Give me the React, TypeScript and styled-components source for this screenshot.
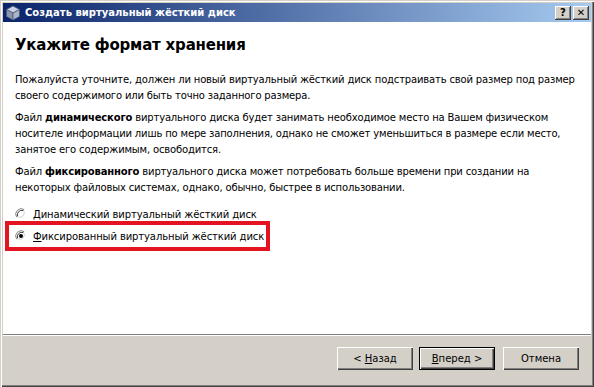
import { createGlobalStyle, styled } from 'styled-components';

const GlobalStyle = createGlobalStyle`
  html, body {
    margin: 0;
    padding: 0;
    background: #d4d0c8;
  }
  body {
    font-family: 'DejaVu Sans', 'Liberation Sans', sans-serif;
    color: #000;
  }
`;

const Window = styled.div`
  width: 594px;
  height: 387px;
  box-sizing: border-box;
  display: flex;
  flex-direction: column;
  padding: 3px 3px 2px 3px;
  background: #d4d0c8;
  box-shadow:
    inset 1px 1px #d4d0c8,
    inset 2px 2px #ffffff,
    inset -1px -1px #404040,
    inset -2px -2px #808080;
`;

const TitleBar = styled.div`
  height: 19px;
  display: flex;
  align-items: center;
  padding: 0 2px 0 2px;
  background: linear-gradient(to right, #0a246a, #a6caf0);
`;

const TitleText = styled.span`
  flex: 1;
  margin-left: 4px;
  color: #fff;
  font-weight: bold;
  font-size: 10px;
  white-space: nowrap;
`;

const CaptionButton = styled.button`
  width: 16px;
  height: 14px;
  margin-left: 2px;
  padding: 0;
  display: flex;
  align-items: center;
  justify-content: center;
  border: none;
  background: #d4d0c8;
  font-family: 'DejaVu Sans', sans-serif;
  font-weight: bold;
  font-size: 10px;
  line-height: 1;
  color: #000;
  box-shadow:
    inset -1px -1px #404040,
    inset 1px 1px #ffffff,
    inset -2px -2px #808080;
`;

const Content = styled.div`
  flex: 1;
  background: #fff;
  padding: 14px 12px 0 12px;
  border-bottom: 1px solid #808080;
  box-shadow: 0 1px 0 #ffffff;
  margin-bottom: 1px;
`;

const Heading = styled.h1`
  margin: 0 0 17px 0;
  font-size: 15px;
  line-height: 19px;
  font-weight: bold;
  letter-spacing: -0.2px;
`;

const Paragraph = styled.p`
  margin: 0 0 6px 0;
  font-size: 10px;
  line-height: 16px;
  letter-spacing: -0.16px;
  white-space: nowrap;
`;

const Options = styled.div`
  display: flex;
  flex-direction: column;
  gap: 0;
  margin-top: 9px;
`;

const RadioRow = styled.label`
  display: flex;
  align-items: center;
  gap: 6px;
  height: 18px;
  font-size: 10px;
  letter-spacing: -0.1px;
`;

const Highlight = styled.div`
  box-sizing: border-box;
  width: 265px;
  height: 30px;
  margin: -2px 0 0 -10px;
  padding-left: 6px;
  display: flex;
  align-items: center;
  border: 4px solid #e3131f;
`;

const Footer = styled.div`
  height: 49px;
  display: flex;
  justify-content: flex-end;
  align-items: flex-start;
  padding: 11px 12px 0 0;
  box-sizing: border-box;
`;

const Button = styled.button<{ $default?: boolean; $gap?: number }>`
  width: 76px;
  height: 23px;
  margin-left: ${(p) => p.$gap ?? 0}px;
  border: none;
  background: #d4d0c8;
  font-family: 'DejaVu Sans', sans-serif;
  font-size: 10px;
  color: #000;
  padding: 0;
  box-shadow: ${(p) =>
    p.$default
      ? 'inset 1px 1px #000, inset -1px -1px #000, inset 2px 2px #fff, inset -2px -2px #404040, inset -3px -3px #808080'
      : 'inset 1px 1px #fff, inset -1px -1px #404040, inset -2px -2px #808080'};
`;

function Radio({ checked }: { checked?: boolean }) {
  return (
    <svg width="12" height="12" viewBox="0 0 12 12">
      <circle cx="6" cy="6" r="5" fill="#fff" />
      <path d="M1.6 9.2 A5.5 5.5 0 0 1 9.2 1.6" fill="none" stroke="#808080" />
      <path d="M2.6 8.4 A4.5 4.5 0 0 1 8.4 2.6" fill="none" stroke="#404040" />
      <path d="M9.9 2.4 A5.5 5.5 0 0 1 2.4 9.9" fill="none" stroke="#ffffff" />
      <path d="M9.0 3.2 A4.5 4.5 0 0 1 3.2 9.0" fill="none" stroke="#d4d0c8" />
      {checked && <circle cx="6" cy="6" r="2" fill="#000" />}
    </svg>
  );
}

function CubeIcon() {
  return (
    <svg width="16" height="16" viewBox="0 0 16 16">
      <polygon points="8,1 14.5,4.5 8,8 1.5,4.5" fill="#c9d3e3" stroke="#4a5a7a" strokeWidth="0.8" />
      <polygon points="1.5,4.5 8,8 8,15 1.5,11.5" fill="#8a97ad" stroke="#4a5a7a" strokeWidth="0.8" />
      <polygon points="14.5,4.5 8,8 8,15 14.5,11.5" fill="#aab5c8" stroke="#4a5a7a" strokeWidth="0.8" />
    </svg>
  );
}

export default function App() {
  return (
    <>
      <GlobalStyle />
      <Window>
        <TitleBar>
          <CubeIcon />
          <TitleText>Создать виртуальный жёсткий диск</TitleText>
          <CaptionButton>?</CaptionButton>
          <CaptionButton>✕</CaptionButton>
        </TitleBar>

        <Content>
          <Heading>Укажите формат хранения</Heading>

          <Paragraph>
            Пожалуйста уточните, должен ли новый виртуальный жёсткий диск подстраивать свой размер под размер
            <br />
            своего содержимого или быть точно заданного размера.
          </Paragraph>

          <Paragraph>
            Файл <b>динамического</b> виртуального диска будет занимать необходимое место на Вашем физическом
            <br />
            носителе информации лишь по мере заполнения, однако не сможет уменьшиться в размере если место,
            <br />
            занятое его содержимым, освободится.
          </Paragraph>

          <Paragraph>
            Файл <b>фиксированного</b> виртуального диска может потребовать больше времени при создании на
            <br />
            некоторых файловых системах, однако, обычно, быстрее в использовании.
          </Paragraph>

          <Options>
            <RadioRow>
              <Radio />
              <span>
                <u>Д</u>инамический виртуальный жёсткий диск
              </span>
            </RadioRow>
            <Highlight>
              <RadioRow>
                <Radio checked />
                <span>
                  <u>Ф</u>иксированный виртуальный жёсткий диск
                </span>
              </RadioRow>
            </Highlight>
          </Options>
        </Content>

        <Footer>
          <Button>
            &lt; <u>Н</u>азад
          </Button>
          <Button $default $gap={6}>
            <u>В</u>перед &gt;
          </Button>
          <Button $gap={8}>Отмена</Button>
        </Footer>
      </Window>
    </>
  );
}
